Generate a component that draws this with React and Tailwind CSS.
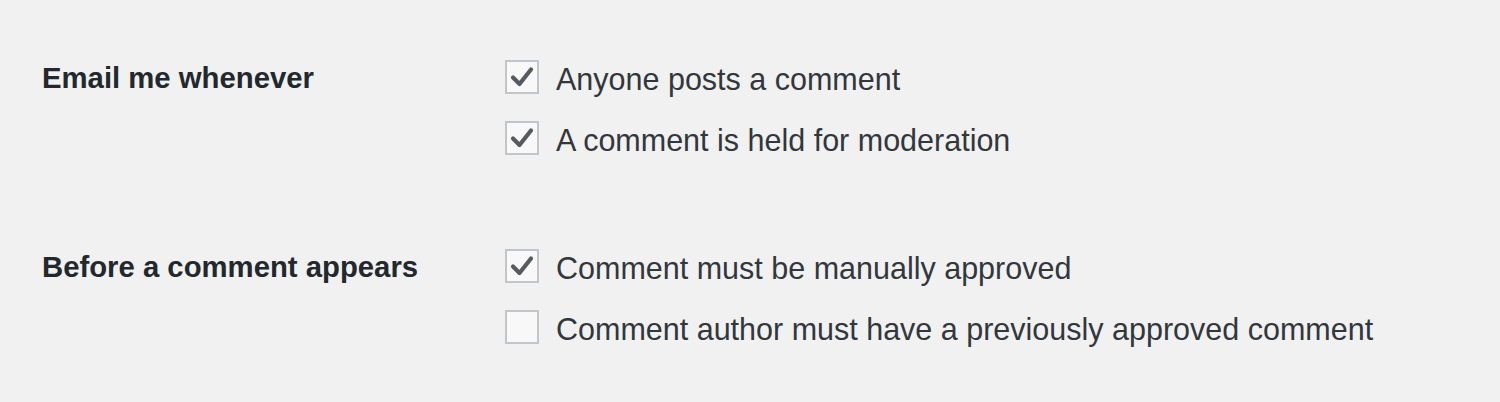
const sections = [
  {
    label: 'Email me whenever',
    options: [
      { text: 'Anyone posts a comment', checked: true },
      { text: 'A comment is held for moderation', checked: true },
    ],
  },
  {
    label: 'Before a comment appears',
    options: [
      { text: 'Comment must be manually approved', checked: true },
      { text: 'Comment author must have a previously approved comment', checked: false },
    ],
  },
];

const Checkbox = ({ checked }) => (
  <span className="flex h-[34px] w-[34px] shrink-0 items-center justify-center border-2 border-[#c3c6c9] bg-[#f8f8f8]">
    {checked && (
      <svg width="24" height="22" viewBox="0 0 24 22">
        <path
          d="M3 11.5 L9.5 18 L21 3.5"
          fill="none"
          stroke="#555b61"
          strokeWidth="4.2"
          strokeLinecap="round"
          strokeLinejoin="round"
        />
      </svg>
    )}
  </span>
);

const App = () => {
  return (
    <div className="h-[402px] w-[1500px] bg-[#f1f1f1] pl-[42px] pt-[60px] font-['Liberation_Sans',Arial,sans-serif]">
      <div className="flex flex-col gap-[94px]">
        {sections.map((section) => (
          <div key={section.label} className="flex">
            <div className="w-[463px] shrink-0 text-[29.3px] font-bold leading-[36px] text-[#23282d]">
              {section.label}
            </div>
            <div className="flex flex-col gap-[27px]">
              {section.options.map((opt) => (
                <label key={opt.text} className="flex items-start gap-[17px]">
                  <Checkbox checked={opt.checked} />
                  <span className="h-[34px] text-[30.5px] leading-[39px] text-[#32373c]">{opt.text}</span>
                </label>
              ))}
            </div>
          </div>
        ))}
      </div>
    </div>
  );
};

export default App;
